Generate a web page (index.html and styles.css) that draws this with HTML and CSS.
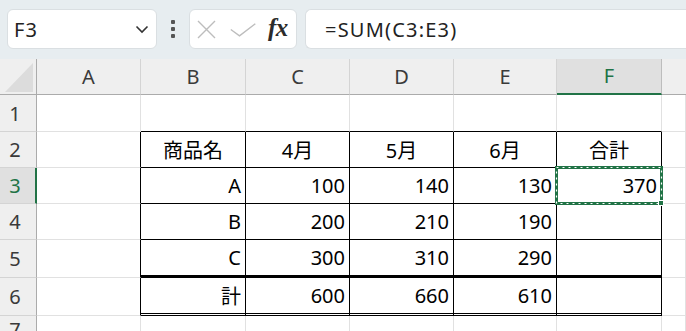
FILE: index.html
```html
<!DOCTYPE html>
<html lang="ja">
<head>
<meta charset="utf-8">
<title>Sheet</title>
<link rel="stylesheet" href="styles.css">
</head>
<body>
<div class="toolbar">
  <div class="namebox">
    <span class="name">F3</span>
    <svg class="chev" width="14" height="9" viewBox="0 0 14 9"><path d="M1.5 1.5 L7 7 L12.5 1.5" fill="none" stroke="#333" stroke-width="1.6"/></svg>
  </div>
  <div class="dots"><i></i><i></i><i></i></div>
  <div class="fxbox">
    <svg class="ico-x" width="19" height="19" viewBox="0 0 19 19"><path d="M1 1 L18 18 M18 1 L1 18" stroke="#bdbdbd" stroke-width="1.4" fill="none"/></svg>
    <svg class="ico-ok" width="26" height="14" viewBox="0 0 26 14"><path d="M0.8 6.5 L9.5 12.8 L25.3 0.8" stroke="#bdbdbd" stroke-width="1.4" fill="none"/></svg>
    <span class="fx">fx</span>
  </div>
  <div class="formula">=SUM(C3:E3)</div>
</div>
<div class="sheet">
  <div class="corner"><div class="tri"></div></div>
  <div class="ch">A</div><div class="ch">B</div><div class="ch">C</div><div class="ch">D</div><div class="ch">E</div><div class="ch ch-sel">F</div><div class="ch ch-last"></div>

  <div class="rh">1</div>
  <div class="c"></div><div class="c tt"></div><div class="c tt"></div><div class="c tt"></div><div class="c tt"></div><div class="c tt"></div><div class="c"></div>

  <div class="rh">2</div>
  <div class="c tl"></div><div class="c t mid">商品名</div><div class="c t mid">4月</div><div class="c t mid">5月</div><div class="c t mid">6月</div><div class="c t mid">合計</div><div class="c"></div>

  <div class="rh rh-sel">3</div>
  <div class="c tl"></div><div class="c t">A</div><div class="c t">100</div><div class="c t">140</div><div class="c t">130</div>
  <div class="c t sel">370
    <svg class="ants" width="108" height="39" viewBox="0 0 108 39"><rect x="1.5" y="1.5" width="105" height="36" fill="none" stroke="#217346" stroke-width="3"/><rect x="1.5" y="1.5" width="105" height="36" fill="none" stroke="#ffffff" stroke-width="1.2" stroke-dasharray="2 4"/></svg>
    <span class="handle"></span>
  </div>
  <div class="c"></div>

  <div class="rh">4</div>
  <div class="c tl"></div><div class="c t">B</div><div class="c t">200</div><div class="c t">210</div><div class="c t">190</div><div class="c t"></div><div class="c"></div>

  <div class="rh">5</div>
  <div class="c tl"></div><div class="c t thick">C</div><div class="c t thick">300</div><div class="c t thick">310</div><div class="c t thick">290</div><div class="c t thick"></div><div class="c"></div>

  <div class="rh">6</div>
  <div class="c tl"></div><div class="c t dbl">計</div><div class="c t dbl">600</div><div class="c t dbl">660</div><div class="c t dbl">610</div><div class="c t dbl"></div><div class="c"></div>

  <div class="rh">7</div>
  <div class="c"></div><div class="c"></div><div class="c"></div><div class="c"></div><div class="c"></div><div class="c"></div><div class="c"></div>
</div>
</body>
</html>
```
FILE: styles.css
```css
* { box-sizing: border-box; }
html, body { margin: 0; padding: 0; }
body {
  width: 686px;
  height: 331px;
  overflow: hidden;
  background: #ffffff;
  font-family: "Noto Sans", "Noto Sans CJK JP", sans-serif;
  font-size: 20px;
  color: #000;
}

.toolbar {
  height: 59px;
  background: #e7edf0;
  display: flex;
  align-items: flex-start;
  padding-top: 9px;
  padding-left: 7px;
  overflow: hidden;
}
.toolbar > * { flex-shrink: 0; }
.namebox {
  width: 150px;
  height: 40px;
  background: #fff;
  border: 1px solid #dadfe2;
  border-radius: 6px;
  display: flex;
  align-items: center;
  justify-content: space-between;
  padding: 0 7px 0 6px;
}
.name { font-size: 20px; color: #222; letter-spacing: 1px; }
.chev { margin-top: 1px; }
.dots {
  width: 32px;
  height: 40px;
  display: flex;
  flex-direction: column;
  align-items: center;
  justify-content: center;
  gap: 3px;
  padding-bottom: 1px;
}
.dots i {
  display: block;
  width: 4px;
  height: 4px;
  background: #555;
  border-radius: 1px;
}
.fxbox {
  width: 108px;
  height: 40px;
  background: #fff;
  border: 1px solid #dadfe2;
  border-radius: 6px;
  display: flex;
  align-items: center;
  padding-left: 7px;
}
.ico-x { margin-top: 1px; }
.ico-ok { margin-left: 14px; margin-top: 2px; }
.fx {
  margin-left: 12px;
  font-family: "Liberation Serif", "DejaVu Serif", serif;
  font-style: italic;
  font-weight: bold;
  font-size: 25px;
  color: #2b2b2b;
  letter-spacing: -0.5px;
  margin-top: -3px;
}
.formula {
  margin-left: 8px;
  width: 400px;
  height: 40px;
  background: #fff;
  border: 1px solid #dadfe2;
  border-right: none;
  border-radius: 6px 0 0 6px;
  display: flex;
  align-items: center;
  padding-left: 19px;
  font-size: 20px;
  letter-spacing: 1.2px;
  color: #222;
}

.sheet {
  display: grid;
  grid-template-columns: 37px 104px 105px 104px 104px 103px 105px 1fr;
  grid-template-rows: 36px 37px 36px 36px 36px 38px 38px 1fr;
  height: 272px;
}
.corner {
  background: #efefef;
  border-right: 1px solid #ababab;
  border-bottom: 1px solid #ababab;
  display: flex;
  align-items: flex-end;
  justify-content: flex-end;
  padding: 0 3px 2px 0;
}
.tri {
  width: 28px;
  height: 29px;
  background: #dcdcdc;
  clip-path: polygon(100% 0, 100% 100%, 0 100%);
}
.ch {
  background: #efefef;
  border-right: 1px solid #d4d4d4;
  border-bottom: 1px solid #ababab;
  display: flex;
  align-items: center;
  justify-content: center;
  color: #3a3a3a;
  padding-bottom: 1px;
}
.ch-last { border-right: none; }
.ch-sel {
  background: #e0e0e0;
  color: #217346;
  border-bottom: 2px solid #217346;
  border-right-color: #bdbdbd;
}
.rh {
  background: #efefef;
  border-right: 1px solid #ababab;
  border-bottom: 1px solid #d4d4d4;
  display: flex;
  align-items: center;
  justify-content: center;
  color: #3a3a3a;
  padding-right: 6px;
}
.rh-sel {
  background: #e0e0e0;
  color: #217346;
  border-right: 2px solid #217346;
  padding-right: 5px;
}
.c {
  border-right: 1px solid #e1e1e1;
  border-bottom: 1px solid #e1e1e1;
  display: flex;
  align-items: center;
  justify-content: flex-end;
  padding-right: 4px;
  white-space: nowrap;
}
.c.tl { border-right-color: #000; }
.c.tt { border-bottom-color: #000; }
.c.t { border-right-color: #000; border-bottom-color: #000; }
.c.mid { justify-content: center; padding-right: 0; }
.c.thick { border-bottom: 3px solid #000; }
.c.dbl { border-bottom: 3px double #000; }
.sel { position: relative; }
.ants {
  position: absolute;
  left: -2px;
  top: -2px;
}
.handle {
  position: absolute;
  right: -3px;
  bottom: -3px;
  width: 6px;
  height: 6px;
  background: #217346;
  border: 1px solid #fff;
  box-sizing: border-box;
}
```
